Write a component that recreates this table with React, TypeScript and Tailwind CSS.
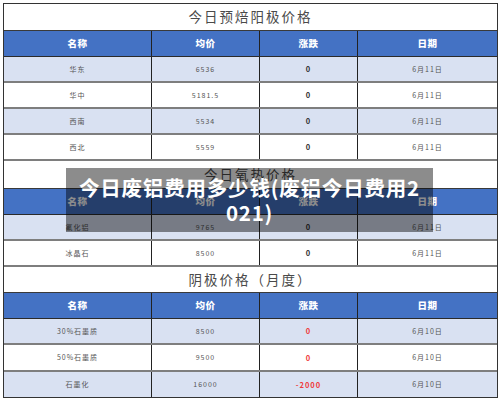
import React from "react";

type Row = { name: string; price: string; change: string; date: string; red?: boolean };

const sec1: Row[] = [
  { name: "华东", price: "6536", change: "0", date: "6月11日" },
  { name: "华中", price: "5181.5", change: "0", date: "6月11日" },
  { name: "西南", price: "5534", change: "0", date: "6月11日" },
  { name: "西北", price: "5559", change: "0", date: "6月11日" },
];
const sec2: Row[] = [
  { name: "氟化铝", price: "9765", change: "0", date: "6月11日" },
  { name: "冰晶石", price: "8500", change: "0", date: "6月11日" },
];
const sec3: Row[] = [
  { name: "30%石墨质", price: "8500", change: "0", date: "6月10日", red: true },
  { name: "50%石墨质", price: "9500", change: "0", date: "6月10日", red: true },
  { name: "石墨化", price: "16000", change: "-2000", date: "6月10日", red: true },
];

function Title({ text, h }: { text: string; h: string }) {
  return (
    <div
      className={`${h} flex items-center justify-center border-b border-[#3a3a3a] bg-white text-[13.5px] tracking-[2px] text-[#4a4a4a] leading-none`}
    >
      {text}
    </div>
  );
}

function Header() {
  const cell = "flex items-center justify-center border-r border-[#222]";
  return (
    <div className="h-[26px] grid grid-cols-[148px_108px_98px_139px] bg-[#4472C4] border-b border-[#2a2a2a] text-white font-extrabold text-[9.5px] tracking-[0.5px]">
      <div className={cell}>名称</div>
      <div className={cell}>均价</div>
      <div className={cell}>涨跌</div>
      <div className="flex items-center justify-center">日期</div>
    </div>
  );
}

function DataRow({ r, light, h, last }: { r: Row; light: boolean; h: string; last?: boolean }) {
  const cell = "flex items-center justify-center border-r border-[#222]";
  return (
    <div
      className={`${h} grid grid-cols-[148px_108px_98px_139px] text-[7px] tracking-[1px] text-[#555] ${
        light ? "bg-[#D9E1F2]" : "bg-white"
      } ${last ? "" : "border-b-2 border-[#7e7e7e]"}`}
    >
      <div className={cell}>{r.name}</div>
      <div className={cell}>{r.price}</div>
      <div className={`${cell} font-bold text-[7.5px] ${r.red ? "text-[#ef3b3b]" : "text-[#333]"}`}>{r.change}</div>
      <div className="flex items-center justify-center">{r.date}</div>
    </div>
  );
}

export default function App() {
  return (
    <div className="relative w-[500px] h-[402px] bg-white overflow-hidden font-['Noto_Sans_CJK_SC','Noto_Sans',sans-serif]">
      <div className="pt-[3px] pl-[3px]">
        <div className="w-[495px] border border-[#333]">
          <Title text="今日预焙阳极价格" h="h-[27px]" />
          <Header />
          {sec1.map((r, i) => (
            <DataRow key={i} r={r} light={i % 2 === 0} h="h-[26px]" />
          ))}
          <Title text="今日氧热价格" h="h-[28px]" />
          <Header />
          {sec2.map((r, i) => (
            <DataRow key={i} r={r} light={i % 2 === 0} h="h-[26px]" />
          ))}
          <Title text="阴极价格（月度）" h="h-[26px]" />
          <Header />
          <DataRow r={sec3[0]} light h="h-[26px]" />
          <DataRow r={sec3[1]} light={false} h="h-[27px]" />
          <DataRow r={sec3[2]} light h="h-[25px]" last />
        </div>
      </div>
      <div className="absolute left-[66px] top-[168px] w-[367px] h-[64px] bg-[rgba(0,0,0,0.45)] flex flex-col items-center justify-center text-white font-bold text-[20.5px] leading-[25px] tracking-[0.8px]">
        <div>今日废铝费用多少钱(废铝今日费用2</div>
        <div>021)</div>
      </div>
    </div>
  );
}
